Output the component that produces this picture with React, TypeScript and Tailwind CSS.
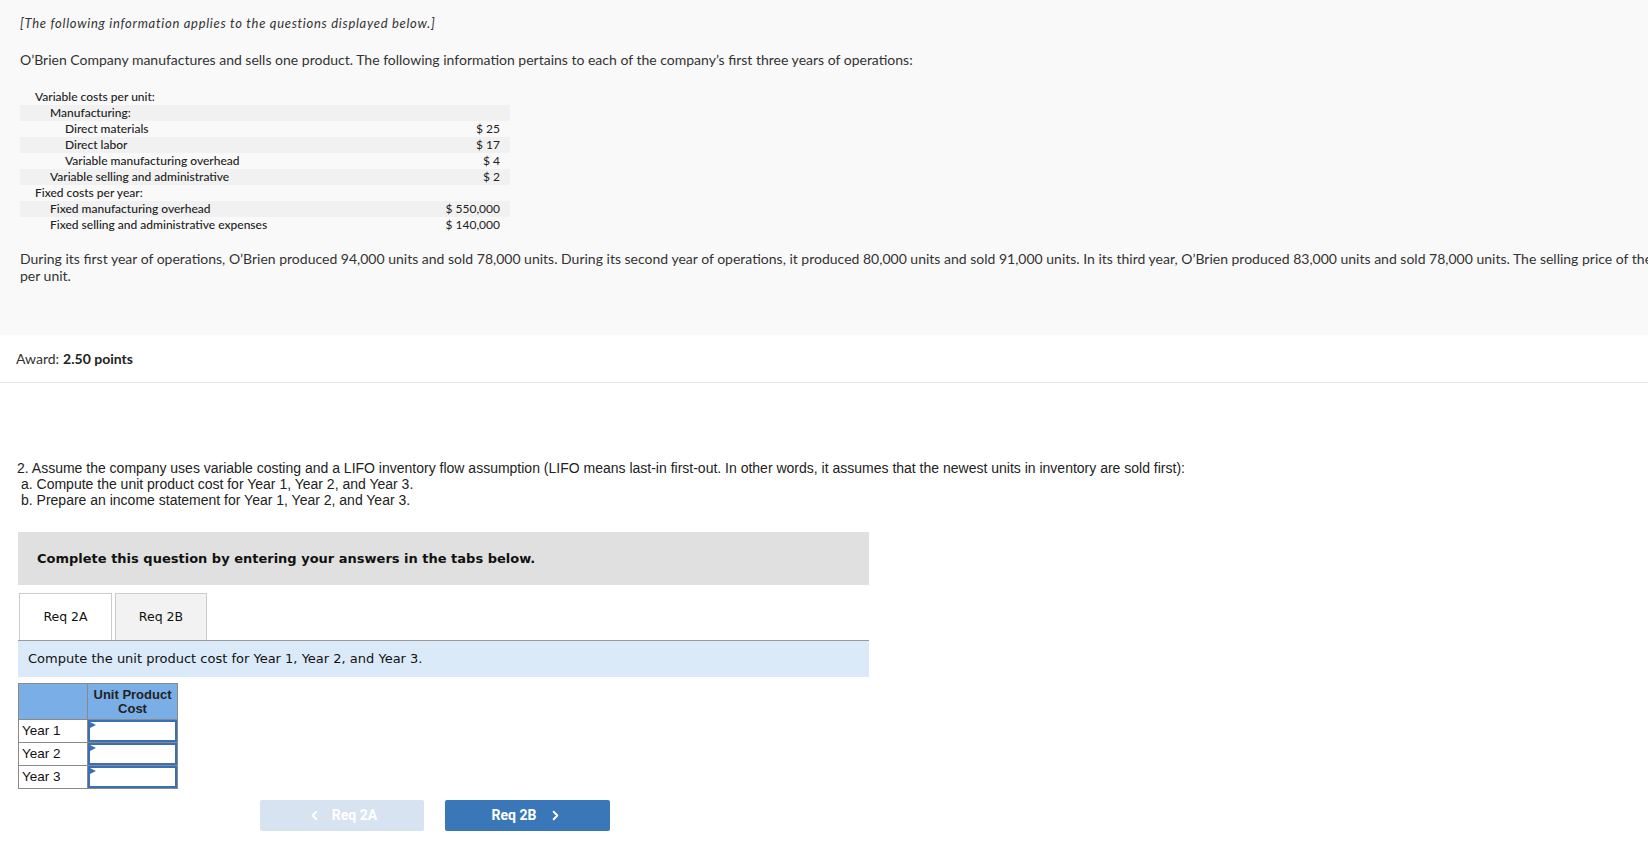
import React from 'react';
import { ChevronLeft, ChevronRight } from 'lucide-react';

const costRows = [
  { label: 'Variable costs per unit:', level: 0, value: '' },
  { label: 'Manufacturing:', level: 1, value: '' },
  { label: 'Direct materials', level: 2, value: '$ 25' },
  { label: 'Direct labor', level: 2, value: '$ 17' },
  { label: 'Variable manufacturing overhead', level: 2, value: '$ 4' },
  { label: 'Variable selling and administrative', level: 1, value: '$ 2' },
  { label: 'Fixed costs per year:', level: 0, value: '' },
  { label: 'Fixed manufacturing overhead', level: 1, value: '$ 550,000' },
  { label: 'Fixed selling and administrative expenses', level: 1, value: '$ 140,000' },
];

const indent = ['pl-[15px]', 'pl-[30px]', 'pl-[45px]'];

const InputCell = () => (
  <td className="p-0 border border-[#8a8a8a]">
    <div className="relative h-[22px] border-2 border-[#3a6fb5] bg-white">
      <svg className="absolute left-0 top-0" width="6" height="6" viewBox="0 0 6 6">
        <polygon points="0,0 6,3 0,6" fill="#3a6fb5" />
      </svg>
    </div>
  </td>
);

const App = () => {
  return (
    <div className="w-[1648px] h-[843px] overflow-hidden bg-white text-[#333]">
      {/* intro */}
      <section
        className="h-[335px] bg-[#f9f9f9] px-[20px] pt-[15px] text-[14px] leading-[17px]"
        style={{ fontFamily: 'Lato, "Open Sans", sans-serif' }}
      >
        <p className="italic text-[13px] tracking-[0.7px]">[The following information applies to the questions displayed below.]</p>
        <p className="mt-[19px]">
          O’Brien Company manufactures and sells one product. The following information pertains to each of the company’s first three years of operations:
        </p>
        <div className="mt-[21px] w-[490px] text-[12px] leading-[16px] font-medium text-[#222]">
          {costRows.map((row, idx) => (
            <div key={idx} className={`flex justify-between h-[16px] ${idx % 2 === 1 ? 'bg-[#f1f1f1]' : ''}`}>
              <span className={indent[row.level]}>{row.label}</span>
              <span className="pr-[10px] font-normal">{row.value}</span>
            </div>
          ))}
        </div>
        <p className="mt-[17px] whitespace-nowrap">
          During its first year of operations, O’Brien produced 94,000 units and sold 78,000 units. During its second year of operations, it produced 80,000 units and sold 91,000 units. In its third year, O’Brien produced 83,000 units and sold 78,000 units. The selling price of the company’s product is $71
          <br />
          per unit.
        </p>
      </section>

      {/* award */}
      <div
        className="h-[48px] flex items-center px-[16px] border-b border-[#e6e6e6] text-[14px]"
        style={{ fontFamily: 'Lato, "Open Sans", sans-serif' }}
      >
        Award: <span className="ml-1 font-bold text-[#222]">2.50 points</span>
      </div>

      {/* question */}
      <div className="pt-[77px] text-[14px] leading-[16px] text-[#222]" style={{ fontFamily: '"Liberation Sans", Arial, sans-serif' }}>
        <p className="pl-[17px]">
          2. Assume the company uses variable costing and a LIFO inventory flow assumption (LIFO means last-in first-out. In other words, it assumes that the newest units in inventory are sold first):
        </p>
        <p className="pl-[21px]">a. Compute the unit product cost for Year 1, Year 2, and Year 3.</p>
        <p className="pl-[21px]">b. Prepare an income statement for Year 1, Year 2, and Year 3.</p>
      </div>

      <div className="ml-[18px] w-[851px]" style={{ fontFamily: '"DejaVu Sans", Verdana, sans-serif' }}>
        <div className="mt-[24px] h-[53px] bg-[#e0e0e0] flex items-center pl-[19px] text-[13px] font-bold text-[#111]">
          Complete this question by entering your answers in the tabs below.
        </div>

        <div className="mt-[8px] flex gap-[3px] border-b border-[#999] text-[12.5px] text-[#111]">
          <div className="ml-[1px] w-[93px] h-[47px] flex items-center justify-center bg-white border border-b-0 border-[#ccc]">Req 2A</div>
          <div className="w-[92px] h-[47px] flex items-center justify-center bg-[#f2f2f2] border border-b-0 border-[#ccc]">Req 2B</div>
        </div>

        <div className="h-[36px] bg-[#daeaf8] flex items-center pl-[10px] text-[13px] text-[#111]">
          Compute the unit product cost for Year 1, Year 2, and Year 3.
        </div>
      </div>

      <table
        className="mt-[6px] ml-[18px] border-collapse border border-[#8a8a8a] text-[13.5px] text-[#111]"
        style={{ fontFamily: '"Liberation Sans", Arial, sans-serif' }}
      >
        <thead>
          <tr className="h-[36px] bg-[#7aaee6]">
            <th className="w-[69px] border border-[#8a8a8a]"></th>
            <th className="w-[90px] border border-[#8a8a8a] text-[13px] leading-[14px] font-bold text-[#222]">
              Unit Product
              <br />
              Cost
            </th>
          </tr>
        </thead>
        <tbody>
          {['Year 1', 'Year 2', 'Year 3'].map((y) => (
            <tr key={y} className="h-[23px]">
              <td className="border border-[#8a8a8a] pl-[3px] bg-white">{y}</td>
              <InputCell />
            </tr>
          ))}
        </tbody>
      </table>

      <div className="mt-[11px] ml-[260px] flex gap-[21px] text-[14px] font-bold text-white" style={{ fontFamily: 'Roboto, Arial, sans-serif' }}>
        <button className="w-[164px] h-[31px] rounded-[2px] bg-[#d7e3f1] flex items-center justify-center">
          <ChevronLeft size={15} strokeWidth={3} className="mr-[10px]" />
          Req 2A
        </button>
        <button className="w-[165px] h-[31px] rounded-[2px] bg-[#3a77b8] flex items-center justify-center">
          Req 2B
          <ChevronRight size={15} strokeWidth={3} className="ml-[12px]" />
        </button>
      </div>
    </div>
  );
};

export default App;
